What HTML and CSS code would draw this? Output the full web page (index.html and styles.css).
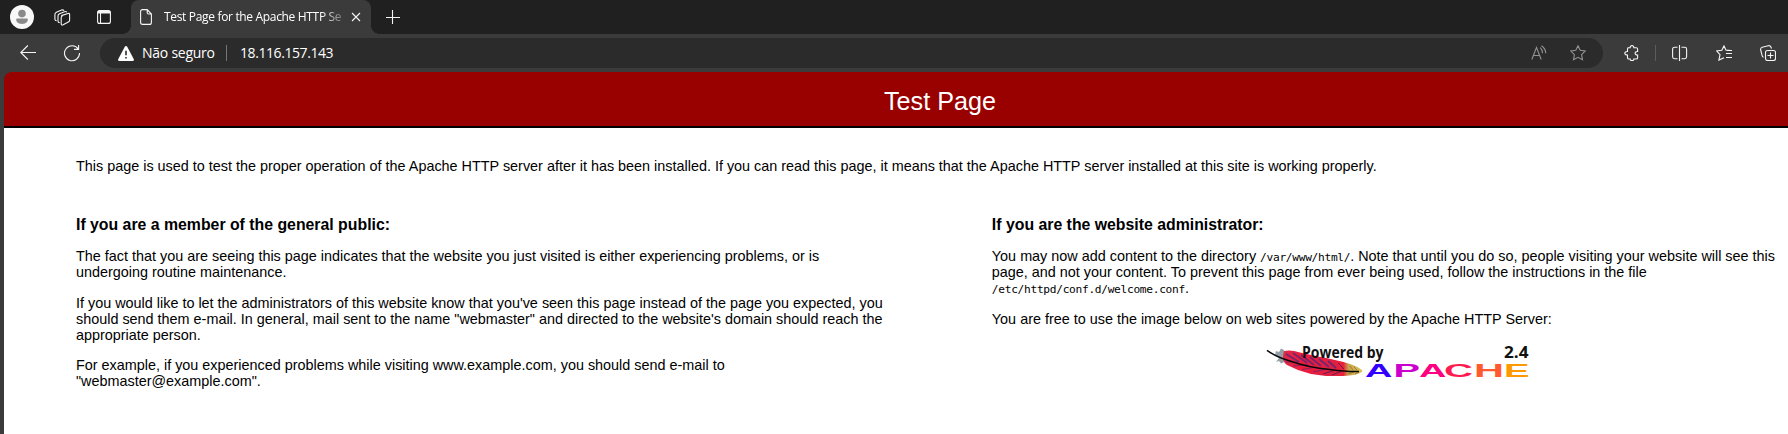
FILE: index.html
```html
<!DOCTYPE html>
<html lang="en">
<head>
<meta charset="utf-8">
<title>Test Page for the Apache HTTP Server</title>
<link rel="stylesheet" href="styles.css">
</head>
<body>
<div class="window">
  <header class="tabbar">
    <svg class="avatar" width="24" height="24" viewBox="0 0 24 24"><circle cx="12" cy="12" r="12" fill="#f8f8f8"/><circle cx="12" cy="8.6" r="3.8" fill="#8a8a8a"/><path d="M6.2 14.6Q6.2 13.6 7.2 13.6H16.8Q17.8 13.6 17.8 14.6C17.8 17.6 15 19 12 19S6.2 17.6 6.2 14.6Z" fill="#8a8a8a"/></svg>
    <svg class="icon workspaces" width="17" height="17" viewBox="0 0 17 17"><path d="M7.2 6.6 14 4.5Q15.6 4.1 15.6 5.6V11.2Q15.6 12.2 14.7 12.7L9.2 15.8Q7.2 16.6 7.2 14.7V8.6Q7.2 7 8.8 6.4"/><path d="M5.7 13.8Q4 13.6 4 12V7Q4 5.400 5.500 4.700L10.500 2.700Q12.200 2.200 12.900 3.300"/><path d="M2.700 11.800Q.9 11.500.9 9.900V5.700Q.9 4 2.400 3.200L7.600 1Q9.200.5 10 1.700"/></svg>
    <svg class="icon tab-actions" width="14" height="14" viewBox="0 0 14 14"><rect x=".6" y=".6" width="12.8" height="12.8" rx="2"/><path d="M3.500 3V13"/><path d="M.8 2.200H13.200" stroke-width="2.600"/></svg>
    <div class="tab">
      <svg class="icon doc" width="12" height="16" viewBox="0 0 12 16"><path d="M2.500.6H7.200L11.400 5V13.400Q11.400 15.400 9.400 15.400H2.600Q.6 15.400.6 13.400V2.600Q.6.600 2.500.6ZM7.200.800V3.600Q7.200 5 8.600 5H11.200"/></svg>
      <span class="tab-title">Test Page for the Apache HTTP Se</span>
      <svg class="icon close" width="10" height="10" viewBox="0 0 10 10"><path d="M1 1 9 9M9 1 1 9"/></svg>
    </div>
    <svg class="icon plus" width="14" height="14" viewBox="0 0 14 14"><path d="M6.500 0V14M0 7.500H14"/></svg>
  </header>
  <nav class="toolbar">
    <svg class="icon back" width="16" height="16" viewBox="0 0 16 16"><path d="M.8 7.500H16M7.800.5 .8 7.500l7 7"/></svg>
    <svg class="icon reload" width="18" height="18" viewBox="0 0 18 18"><path d="M15.300 5.200A7.500 7.500 0 1 0 16.500 9M15.600.9V5.400H11"/></svg>
    <div class="address">
      <svg class="warning" width="16" height="15" viewBox="0 0 16 15"><path d="M8 0Q8.800 0 9.200.7L15.700 13Q16.400 15 14.700 15H1.300Q-.4 15 .3 13L6.800.7Q7.200 0 8 0Z" fill="#fff"/><path d="M8 4.800V9.200M8 10.900V12.600" stroke="#2b2b2b" stroke-width="1.600"/></svg>
      <span class="security">Não seguro</span>
      <span class="rule"></span>
      <span class="url">18.116.157.143</span>
      <svg class="icon dim read" width="16" height="16" viewBox="0 0 16 16"><path d="M.8 14.500 5.500 2.500 10.200 14.500M2.400 10.500H8.600M9.200 2.600Q11.600 4.600 11.500 8.200M10.500.7Q14.700 3.600 14.700 8.200"/></svg>
      <svg class="icon dim" width="16" height="16" viewBox="0 0 16 16"><path d="M8 .8 10.200 5.300 15.300 6 11.600 9.600 12.500 14.800 8 12.300 3.500 14.800 4.400 9.600.7 6 5.800 5.300Z"/></svg>
    </div>
    <svg class="icon puzzle" width="16" height="16" viewBox="0 0 16 16"><path d="M3.500 2.700H6.200C5.900-.1 10.100-.1 9.800 2.700H12.300Q13.600 2.700 13.600 4V6.500C10.300 6.300 10.300 10.300 13.600 10V12.700Q13.600 14 12.300 14H9.800C10.100 16.200 5.900 16.200 6.200 14H4.800Q3.500 14 3.500 12.700V10C-.1 10.300-.1 6.300 3.500 6.500V4Q3.500 2.700 4.800 2.700"/></svg>
    <span class="rule right"></span>
    <svg class="icon split" width="16" height="16" viewBox="0 0 16 16"><path d="M7.500 0V16M5.500 2.300H2.500Q.6 2.300.6 4.200V11.800Q.6 13.700 2.500 13.700H5.500M9.500 2.300H12.700Q14.600 2.300 14.600 4.200V11.800Q14.600 13.700 12.700 13.700H9.500"/></svg>
    <svg class="icon favorites" width="16" height="16" viewBox="0 0 16 16"><path d="M13.600 5.400 9.900 5.100 8 .9 5.800 5.200.7 6 4 9.700 2.900 15.100 8 12.700M10.500 5.500H16M10 8.500H16M10 12.500H16"/></svg>
    <svg class="icon collections" width="16" height="16" viewBox="0 0 16 16"><rect x="5.500" y="5.500" width="10" height="10" rx="2"/><path d="M10.500 7.500V13.500M7.500 10.500H13.500M3.500 12.300Q2.400 12 2.100 10.700L.7 5Q.2 2.900 2.200 2.300L8.200.7Q10.200.2 11 2.200L11.500 3.500"/></svg>
  </nav>
  <main class="viewport">
    <div class="page">
      <h1>Test Page</h1>
      <div class="content">
        <p class="intro">This page is used to test the proper operation of the Apache HTTP server after it has been installed. If you can read this page, it means that the Apache HTTP server installed at this site is working properly.</p>
        <div class="columns">
          <section>
            <h2>If you are a member of the general public:</h2>
            <p>The fact that you are seeing this page indicates that the website you just visited is either experiencing problems, or is undergoing routine maintenance.</p>
            <p>If you would like to let the administrators of this website know that you've seen this page instead of the page you expected, you should send them e-mail. In general, mail sent to the name "webmaster" and directed to the website's domain should reach the appropriate person.</p>
            <p>For example, if you experienced problems while visiting www.example.com, you should send e-mail to "webmaster@example.com".</p>
          </section>
          <section>
            <h2>If you are the website administrator:</h2>
            <p>You may now add content to the directory <code>/var/www/html/</code>. Note that until you do so, people visiting your website will see this page, and not your content. To prevent this page from ever being used, follow the instructions in the file <code>/etc/httpd/conf.d/welcome.conf</code>.</p>
            <p>You are free to use the image below on web sites powered by the Apache HTTP Server:</p>
            <div class="logo">
              <svg width="264" height="38" viewBox="1266 341 264 38">
                <defs>
                  <linearGradient id="vane" x1="0" x2="1"><stop offset="0" stop-color="#dc2a48"/><stop offset=".25" stop-color="#ee1c3c"/><stop offset=".6" stop-color="#dc2044"/><stop offset=".76" stop-color="#e8203a"/><stop offset=".82" stop-color="#c9a24a"/><stop offset="1" stop-color="#d8c45a"/></linearGradient>
                </defs>
                <path d="M1276 350 1279 351 1281 347.500 1284 349 1284 361 1281 362.500 1279 360 1276 361 1279 357 1275 354Z" fill="#93a1a8"/>
                <path d="M1284 350Q1291 348.500 1300 351.500L1318 355.500Q1338 359 1350 363Q1362 367 1362.500 370.500Q1358 374.500 1343 375L1326 375 1311 373 1298 369 1287 364Q1281 360 1284 350Z" fill="url(#vane)"/>
                <path d="M1286 353 1299 361M1293 352 1307 362M1301 354 1314 364M1310 356 1321 365M1319 358 1329 366M1328 360 1336 367" fill="none" stroke="#50267c" stroke-width="1.700" opacity=".75"/>
                <path d="M1286 361 1298 361M1293 365 1308 363.500M1302 368.500 1317 366M1313 371 1326 368" fill="none" stroke="#50267c" stroke-width="1.200" opacity=".6"/>
                <path d="M1323 373 1334 369.500M1332 374 1341 370.500M1338 362 1344 368" fill="none" stroke="#741a4b" stroke-width="1"/>
                <path d="M1350 365 1353 369M1354 366 1357 369M1348 373 1354 371M1355 373 1359 371" fill="none" stroke="#8d7133" stroke-width=".8"/>
                <path d="M1267 349.300Q1276 356 1290 360Q1308 366.500 1330 368.500Q1348 371 1359 370.500" fill="none" stroke="#080808" stroke-width="1.500"/>
                <g class="logo-small">
                  <text x="1302" y="357.300" textLength="81.500" lengthAdjust="spacingAndGlyphs">Powered by</text>
                  <text x="1504" y="357.300" textLength="24.500" lengthAdjust="spacingAndGlyphs">2.4</text>
                </g>
                <g class="logo-large">
                  <text x="1365" y="375.500" textLength="27.500" lengthAdjust="spacingAndGlyphs" fill="#3300ff">A</text>
                  <text x="1393.500" y="375.500" textLength="26.500" lengthAdjust="spacingAndGlyphs" fill="#cc00cc">P</text>
                  <text x="1419" y="375.500" textLength="27.500" lengthAdjust="spacingAndGlyphs" fill="#ff0080">A</text>
                  <text x="1444" y="375.500" textLength="29" lengthAdjust="spacingAndGlyphs" fill="#ff1a50">C</text>
                  <text x="1474" y="375.500" textLength="30" lengthAdjust="spacingAndGlyphs" fill="#ff5a30">H</text>
                  <text x="1504" y="375.500" textLength="25.500" lengthAdjust="spacingAndGlyphs" fill="#ff9900">E</text>
                </g>
              </svg>
            </div>
          </section>
        </div>
      </div>
    </div>
  </main>
</div>
</body>
</html>
```
FILE: styles.css
```css
* { box-sizing: border-box; }
body { margin: 0; }
svg { display: block; flex: none; }
.window {
  width: 1788px; height: 434px; overflow: hidden;
  display: flex; flex-direction: column;
  background: #3b3b3b;
}
.icon { fill: none; stroke: #f5f5f5; stroke-width: 1.1; }
.icon.dim { stroke: #929292; }

.tabbar {
  height: 34px; flex: none; display: flex; align-items: center;
  padding-left: 10px; background: #202020;
}
.workspaces { margin-left: 20px; }
.tab-actions { margin-left: 26px; }
.tab {
  position: relative; width: 240px; height: 34px; margin-left: 20px; padding-left: 9px;
  display: flex; align-items: center;
  background: #3b3b3b; border-radius: 8px 8px 0 0;
}
.tab::before, .tab::after {
  content: ""; position: absolute; bottom: 0; width: 8px; height: 8px;
}
.tab::before { left: -8px; background: radial-gradient(circle at 0 0, #202020 7.5px, #3b3b3b 8px); }
.tab::after { right: -8px; background: radial-gradient(circle at 100% 0, #202020 7.5px, #3b3b3b 8px); }
.tab-title {
  width: 179px; margin-left: 12px; overflow: hidden; white-space: nowrap;
  font: 12px/18px "Open Sans", "Noto Sans", sans-serif; letter-spacing: -0.33px; color: #fff;
  -webkit-mask-image: linear-gradient(90deg, #000 157px, rgba(0,0,0,.25) 179px);
  mask-image: linear-gradient(90deg, #000 157px, rgba(0,0,0,.25) 179px);
}
.close { margin-left: 8px; }
.plus { margin-left: 15px; }

.toolbar {
  height: 38px; flex: none; display: flex; align-items: center;
  padding-left: 20px; background: #3b3b3b;
}
.reload { margin-left: 27px; }
.address {
  width: 1503px; height: 30px; margin-left: 19px; padding: 0 17px 0 18px;
  display: flex; align-items: center;
  border-radius: 15px; background: #2b2b2b; color: #fff;
  font: 14px/20px "Open Sans", "Noto Sans", sans-serif;
}
.security { width: 74px; margin-left: 8px; white-space: nowrap; letter-spacing: -0.25px; }
.rule { width: 1px; height: 16px; margin-left: 10px; background: #767676; flex: none; }
.url { margin-left: 13px; letter-spacing: -0.42px; }
.read { margin: 0 23px 0 auto; }
.puzzle { margin-left: 21px; }
.rule.right { margin-left: 15px; background: #5c5c5c; }
.split { margin-left: 16px; }
.favorites, .collections { margin-left: 28px; }

.viewport {
  height: 362px; flex: none; margin-left: 4px; overflow: hidden;
  border-top-left-radius: 8px;
}
.page {
  width: 1872px; color: #000;
  font: 14.4px/16px "Liberation Sans", Arial, sans-serif;
}
h1 {
  height: 56px; margin: 0; padding-top: 15px; text-align: center;
  font-size: 25.2px; line-height: 29px; font-weight: normal;
  color: #fff; background: #990000; border-bottom: 2px solid #000;
}
.content { min-height: 306px; padding: 30px 72px 0; background: #fff; }
p { margin: 0 0 14.6px; }
.intro { margin: 0; }
.columns {
  display: grid; grid-template-columns: 47% 47%; justify-content: space-between;
  padding-top: 41px;
}
h2 { margin: 0 0 14px; font-size: 15.84px; line-height: 19px; font-weight: bold; }
code { font-family: "DejaVu Sans Mono", monospace; font-size: 11.2px; line-height: 1; letter-spacing: -0.3px; }
.logo { display: flex; justify-content: center; padding-top: 1px; }
.logo-small { font: 700 15.6px "Open Sans", "Noto Sans", sans-serif; fill: #111; }
.logo-large { font: bold 19px "Liberation Sans", Arial, sans-serif; }
```
